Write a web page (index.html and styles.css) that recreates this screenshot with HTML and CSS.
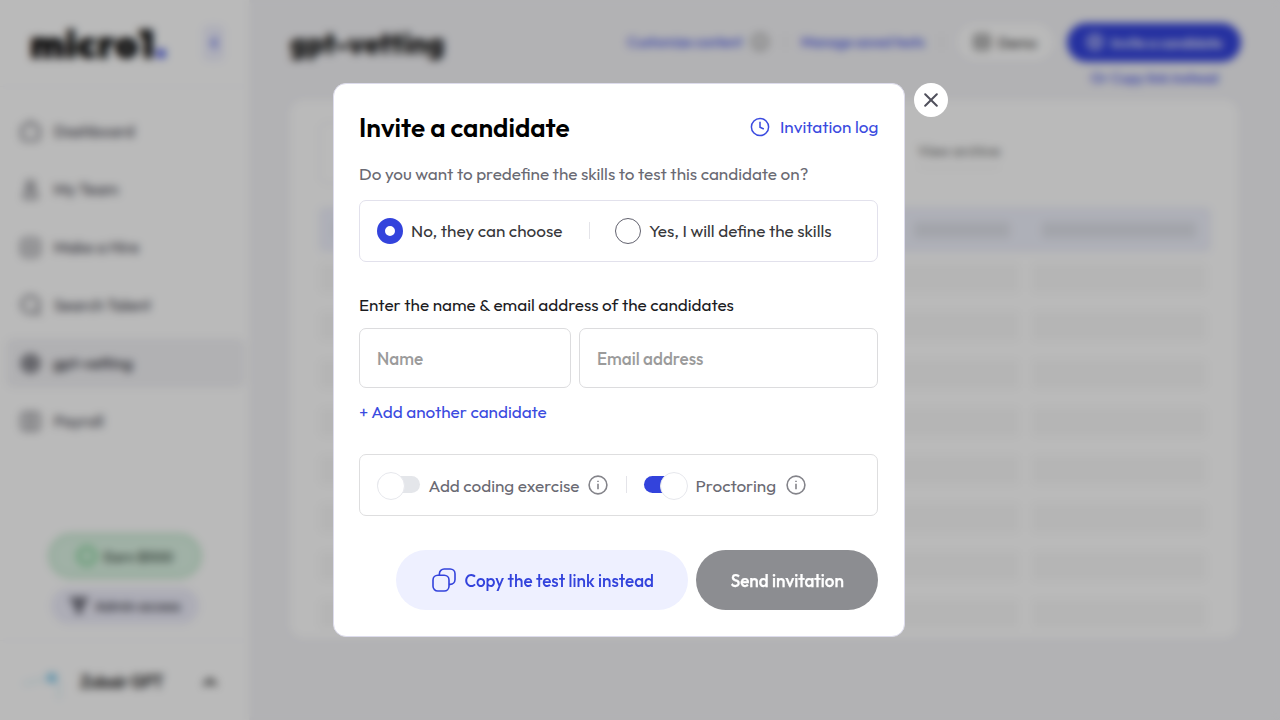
FILE: index.html
```html
<!DOCTYPE html>
<html lang="en">
<head>
<meta charset="utf-8">
<title>Invite a candidate</title>
<link rel="stylesheet" href="styles.css">
</head>
<body>
<div class="app">
  <aside class="sidebar">
    <div class="brand">
      <span class="logo">micro1<span class="dot">.</span></span>
      <span class="collapse"><svg width="10" height="14" viewBox="0 0 10 14"><path d="M8 2 3 7l5 5"/></svg></span>
    </div>
    <nav class="nav">
      <a class="item"><svg class="ico" viewBox="0 0 24 24"><path d="M12 2 21 8v9a4 4 0 0 1-4 4H7a4 4 0 0 1-4-4V8z"/></svg><span>Dashboard</span></a>
      <a class="item"><svg class="ico" viewBox="0 0 24 24"><circle cx="12" cy="7" r="4"/><path d="M6 21v-3a6 6 0 0 1 12 0v3z"/></svg><span>My Team</span></a>
      <a class="item"><svg class="ico" viewBox="0 0 24 24"><rect x="3" y="3" width="18" height="18" rx="5"/><path d="M12 8v8M8 12h8"/></svg><span>Make a Hire</span></a>
      <a class="item"><svg class="ico" viewBox="0 0 24 24"><circle cx="12" cy="11" r="9"/><path d="m18 18 4 4"/></svg><span>Search Talent</span></a>
      <a class="item active"><svg class="ico" viewBox="0 0 24 24"><circle cx="12" cy="12" r="8.5"/><circle cx="12" cy="12" r="3.5"/></svg><span>gpt-vetting</span></a>
      <a class="item"><svg class="ico" viewBox="0 0 24 24"><rect x="3" y="3" width="18" height="18" rx="4"/><path d="M12 6v12M9 9h6M9 15h6"/></svg><span>Payroll</span></a>
    </nav>
    <div class="extras">
      <div class="earn"><svg width="22" height="22" viewBox="0 0 24 24"><circle cx="12" cy="12" r="9"/></svg><span>Earn $500</span></div>
      <div class="admin"><svg width="20" height="20" viewBox="0 0 24 24"><path d="M2 3h20l-7 9v5l-3 4-3-4v-5z"/></svg><span>Admin access</span></div>
    </div>
    <div class="profile">
      <svg width="44" height="36" viewBox="0 0 44 36"><path class="trail" d="M3 20 30 14M39 18v17"/><circle class="head" cx="32" cy="14" r="5"/></svg>
      <span class="who">Zubair GPT</span>
      <svg class="caret" width="16" height="12" viewBox="0 0 16 12"><path d="M2 9 8 4l6 5"/></svg>
    </div>
  </aside>
  <main class="main">
    <header class="top">
      <h1 class="page-title">gpt-vetting</h1>
      <div class="actions">
        <span class="link custom">Customize content</span>
        <svg class="help" width="18" height="18" viewBox="0 0 18 18"><circle cx="9" cy="9" r="7.5"/><path d="M9 8v5M9 5v1"/></svg>
        <i class="bar bar-a"></i>
        <span class="link manage">Manage saved tests</span>
        <i class="bar bar-b"></i>
        <span class="demo"><svg width="16" height="16" viewBox="0 0 16 16"><rect x="1" y="1" width="14" height="14" rx="3"/><path d="M5 5v6M11 5v6M5 8h6"/></svg>Demo</span>
        <span class="invite"><svg width="18" height="18" viewBox="0 0 18 18"><circle cx="9" cy="9" r="7"/><path d="M6 9h6M9 6v6"/></svg>Invite a candidate</span>
      </div>
    </header>
    <div class="copy-link">Or Copy link instead</div>
    <section class="card">
      <div class="filters"><span class="search"></span><span class="archive">View archive</span></div>
      <div class="thead"><i></i><i></i><i></i><i></i></div>
      <div class="rows">
        <div class="row"><i></i><i></i><i></i></div><div class="row"><i></i><i></i><i></i></div>
        <div class="row"><i></i><i></i><i></i></div><div class="row"><i></i><i></i><i></i></div>
        <div class="row"><i></i><i></i><i></i></div><div class="row"><i></i><i></i><i></i></div>
        <div class="row"><i></i><i></i><i></i></div><div class="row"><i></i><i></i><i></i></div>
      </div>
    </section>
  </main>
</div>
<div class="overlay">
  <div class="modal" role="dialog">
    <div class="modal-head">
      <h2 class="title">Invite a candidate</h2>
      <a class="log"><svg width="20" height="20" viewBox="0 0 20 20"><circle cx="10" cy="10" r="8.6"/><path d="M10 4.8V10.2L13.8 12"/></svg><span>Invitation log</span></a>
    </div>
    <p class="question">Do you want to predefine the skills to test this candidate on?</p>
    <div class="box choices">
      <span class="radio on"></span><span class="opt-no">No, they can choose</span>
      <i class="sep"></i>
      <span class="radio"></span><span class="opt-yes">Yes, I will define the skills</span>
    </div>
    <p class="label">Enter the name &amp; email address of the candidates</p>
    <div class="fields">
      <div class="field name"><span>Name</span></div>
      <div class="field email"><span>Email address</span></div>
    </div>
    <a class="add">+ Add another candidate</a>
    <div class="box toggles">
      <span class="switch"></span><span class="t-code">Add coding exercise</span>
      <svg class="info" width="20" height="20" viewBox="0 0 20 20"><circle cx="10" cy="10" r="8.9"/><path d="M10 8.8v5.4"/><path d="M10 5.7v1.2"/></svg>
      <i class="sep"></i>
      <span class="switch on"></span><span class="t-proc">Proctoring</span>
      <svg class="info" width="20" height="20" viewBox="0 0 20 20"><circle cx="10" cy="10" r="8.9"/><path d="M10 8.8v5.4"/><path d="M10 5.7v1.2"/></svg>
    </div>
    <div class="buttons">
      <a class="btn copy"><svg width="24" height="24" viewBox="0 0 24 24"><rect x="1" y="7.2" width="16" height="15.8" rx="4.8"/><path d="M7.4 7.2V5.8A4.8 4.8 0 0 1 12.2 1H18.2A4.8 4.8 0 0 1 23 5.8V11.6A4.8 4.8 0 0 1 18.2 16.4H17"/></svg><span>Copy the test link instead</span></a>
      <a class="btn send"><span>Send invitation</span></a>
    </div>
  </div>
  <span class="close"><svg width="14" height="14" viewBox="0 0 14 14"><path d="M1.2 1.2 12.8 12.8M12.8 1.2 1.2 12.8"/></svg></span>
</div>
</body>
</html>
```

FILE: styles.css
```css
* { box-sizing: border-box; }
body { margin: 0; width: 1280px; height: 720px; overflow: hidden; font-family: Outfit, Lato, sans-serif; font-size: 17.1px; color: #222; }
h1, h2, p { margin: 0; }
svg { fill: none; stroke: currentColor; stroke-width: 2; flex: none; }
span, a, h1, h2, p { white-space: nowrap; }

.app { display: flex; width: 1280px; height: 720px; background: #f4f4f7; }
.sidebar { width: 249px; height: 720px; background: #fff; display: flex; flex-direction: column; flex: none; }
.brand { height: 87px; padding: 0 25px 0 30px; display: flex; align-items: center; justify-content: space-between; border-bottom: 1px solid #f8f8fa; }
.logo { font-size: 39px; font-weight: 900; color: #000; letter-spacing: 0.7px; -webkit-text-stroke: 0.4px #000; }
.dot { color: #3343dc; -webkit-text-stroke: 0.4px #3343dc; }
.collapse { width: 21px; height: 36px; border-radius: 5px; background: #eff0fe; color: #3343dc; display: flex; align-items: center; justify-content: center; }
.nav { padding: 19px 4px 0 6px; display: flex; flex-direction: column; gap: 8px; }
.item { height: 50px; padding-left: 13px; border-radius: 8px; display: flex; align-items: center; gap: 12px; color: #4b4b55; font-size: 16.1px; font-weight: 400; -webkit-text-stroke: 0.2px; }
.ico { width: 23px; height: 23px; }
.active { background: #f3f3f6; color: #2a2a33; gap: 11px; }
.active .ico { stroke-width: 3; color: #4b4b55; }
.extras { margin-top: auto; padding-bottom: 16px; display: flex; flex-direction: column; align-items: center; gap: 10px; }
.earn { width: 152px; height: 44px; border-radius: 22px; border: 2px solid #a5dcb4; background: #dcf3e4; display: flex; align-items: center; justify-content: center; gap: 6px; font-size: 14.5px; font-weight: 500; color: #33463a; }
.earn svg { color: #7bd293; stroke-width: 4; }
.admin { width: 148px; height: 36px; border-radius: 18px; background: #ededfa; display: flex; align-items: center; justify-content: center; gap: 6px; font-size: 14.2px; font-weight: 500; color: #3a3a46; }
.admin svg { fill: #777783; }
.profile { height: 80px; border-top: 1px solid #f8f8fa; display: flex; align-items: center; padding: 2px 31px 0 20px; }
.trail { stroke: #cdeaf6; stroke-width: 2; }
.head { fill: #7cc6ea; stroke: none; }
.who { margin-left: 16px; font-size: 17px; font-weight: 600; color: #222; letter-spacing: -0.5px; }
.caret { margin-left: auto; stroke-width: 3; }

.main { flex: 1; padding: 21px 42px 0 41px; }
.top { height: 42px; display: flex; justify-content: space-between; align-items: center; margin-right: -3px; }
.page-title { font-size: 29px; font-weight: 800; color: #111; letter-spacing: -0.1px; margin-top: 2px; }
.actions { display: flex; align-items: center; }
.link { font-size: 14.3px; font-weight: 500; color: #4755e6; }
.custom { width: 115px; letter-spacing: -0.15px; }
.manage { width: 126px; letter-spacing: -0.15px; }
.help { margin: 0 16px 0 9px; color: #aaa; stroke-width: 3; }
.bar { width: 1px; height: 16px; background: #dddde2; }
.bar-a { margin-right: 15px; }
.bar-b { margin: 0 16px 0 14px; }
.demo { width: 95px; height: 36px; border-radius: 18px; background: #fff; display: flex; align-items: center; justify-content: center; gap: 8px; font-size: 14.5px; font-weight: 400; margin-right: 14px; }
.demo svg { color: #555; }
.invite { width: 174px; height: 39px; border-radius: 20px; background: #3343dc; color: #fff; display: flex; align-items: center; justify-content: center; gap: 7px; font-size: 14.5px; font-weight: 500; letter-spacing: -0.2px; }
.copy-link { height: 31px; line-height: 30px; text-align: right; padding-right: 20px; font-size: 14.5px; font-weight: 500; color: #4755e6; letter-spacing: -0.1px; }
.card { margin-top: 6px; height: 538px; border-radius: 14px; background: #fff; padding: 22px 27px 0 29px; }
.filters { height: 85px; display: flex; justify-content: space-between; }
.search { width: 300px; height: 62px; border: 1px solid #ececf0; border-radius: 8px; }
.archive { height: 46px; line-height: 58px; font-size: 14.5px; color: #666; margin-right: 211px; border-bottom: 1px solid #eaeaea; }
.thead { height: 45px; border-radius: 5px; background: #eff1fc; display: grid; grid-template-columns: 255px 260px 96px 154px; column-gap: 32px; align-items: center; padding-left: 16px; }
.thead i { height: 16px; border-radius: 4px; background: #dfe2ea; }
.rows { padding: 11px 4px 0 0; display: flex; flex-direction: column; gap: 18px; }
.row { height: 30px; display: grid; grid-template-columns: 340px 1fr 176px; column-gap: 11px; }
.row i { background: #f9f9f9; border-radius: 5px; }

.overlay { position: fixed; inset: 0; background: rgba(0, 0, 0, 0.27); backdrop-filter: blur(4px); display: flex; align-items: flex-start; gap: 9px; padding: 83.3px 0 0 332.5px; }
.modal { width: 572.3px; height: 553.4px; background: #fff; border: 1px solid #dddcec; border-radius: 13px; padding: 25px 25.5px 0; display: flex; flex-direction: column; }
.modal-head { height: 36px; display: flex; justify-content: space-between; align-items: center; }
.title { font-size: 26.1px; font-weight: 600; color: #000; padding-top: 1px; }
.log { display: flex; align-items: center; gap: 9.5px; color: #3b4be0; }
.log span { margin-top: -1px; }
.log svg { stroke-width: 1.5; }
.question { margin-top: 17px; height: 24px; line-height: 24px; color: #6a6a73; }
.box { height: 62px; border: 1px solid #e2e1ec; border-radius: 7px; display: flex; align-items: center; padding-left: 17px; flex: none; }
.choices { margin-top: 13.5px; color: #38383b; }
.radio { width: 26px; height: 26px; border-radius: 50%; border: 1px solid #62626e; margin-right: 8px; }
.radio.on { border: 8px solid #3343dc; }
.sep { width: 1px; height: 17px; background: #e4e4e9; }
.opt-no { width: 152px; }
.choices .sep { margin: 0 25.5px; }
.label { margin-top: 31px; height: 24px; line-height: 24px; color: #1c1c1f; }
.fields { display: flex; gap: 8.5px; margin-top: 11px; }
.field { height: 60px; border: 1px solid #dcdcde; border-radius: 7px; padding-left: 17px; display: flex; align-items: center; font-size: 17.1px; font-weight: 500; color: #9b9b9b; }
.field span { padding-top: 1px; }
.name { width: 211.5px; }
.email { flex: 1; }
.add { margin-top: 12.5px; height: 24px; line-height: 24px; color: #3b4be0; }
.toggles { margin-top: 29.5px; color: #6a6a73; border-color: #dededf; }
.toggles > span:not(.switch) { padding-top: 1px; }
.switch { position: relative; width: 43px; height: 17px; border-radius: 9px; background: #e4e6ea; margin-right: 8.5px; }
.switch::after { content: ""; position: absolute; top: -4.5px; left: 0; width: 26px; height: 26px; border-radius: 50%; background: #fff; border: 1px solid #e6e7ec; }
.switch.on { background: linear-gradient(90deg, #3343dc 70%, transparent 70%); }
.switch.on::after { left: auto; right: -0.5px; }
.t-code { width: 151px; margin-right: 8.5px; }
.t-proc { width: 81px; margin-right: 9px; }
.info { color: #84848a; stroke-width: 1.6; }
.toggles .sep { margin: 0 17px 0 18px; }
.buttons { margin-top: 34.4px; display: flex; justify-content: flex-end; gap: 8.5px; }
.btn { height: 60px; border-radius: 30px; display: flex; align-items: center; justify-content: center; font-weight: 500; }
.btn span { padding-top: 1px; }
.copy { width: 292px; background: #eef0ff; color: #3343dc; gap: 9px; padding-left: 2px; }
.copy svg { stroke-width: 1.6; }
.send { width: 182px; background: #8c8d91; color: #fff; -webkit-text-stroke: 0.25px #fff; }
.close { width: 34px; height: 34px; border-radius: 50%; background: #fff; color: #50505c; display: flex; align-items: center; justify-content: center; }
.close svg { stroke-width: 2; stroke-linecap: round; }
```
